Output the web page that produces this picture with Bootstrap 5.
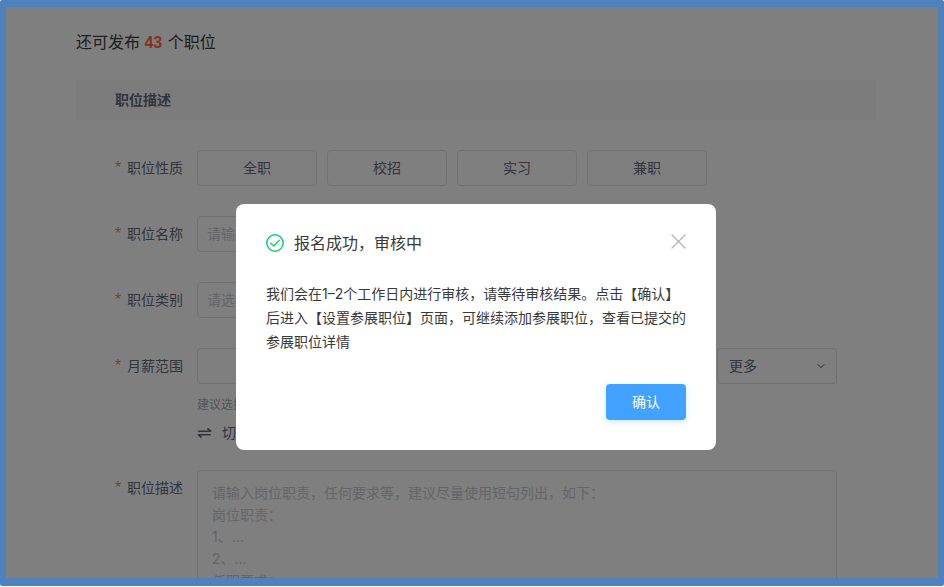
<!DOCTYPE html>
<html lang="zh-CN">
<head>
<meta charset="utf-8">
<meta name="viewport" content="width=device-width, initial-scale=1">
<title>发布职位</title>
<link href="https://cdn.jsdelivr.net/npm/bootstrap@5.3.0/dist/css/bootstrap.min.css" rel="stylesheet">
<style>
body { font-family: "Liberation Sans", "Noto Sans CJK SC", sans-serif; font-size: 14px; line-height: 20px; color: #666b7c; background: #fff; }
.frame { height: calc(100vh - 1px); background: #4f81bd; border-radius: 2px; padding: 7px 6px 8px; }
.stage { background: #fff; }
.job-form { padding: 24px 62px 0 70px; }
.quota { font-size: 16px; line-height: 24px; color: #3c3c3c; margin-bottom: 25px; }
.quota strong { color: #ff6a3d; margin-right: 1px; }
.section-head { background: #f8f8f8; font-size: 14px; line-height: 20px; font-weight: 700; padding: 10px 39px; margin-bottom: 30px; }
.fields { padding: 0 39px; }
.field-row { margin-bottom: 30px; }
.salary-row { margin-bottom: 27px; }
.field-label { width: 68px; margin-right: 14px; line-height: 36px; white-space: nowrap; display: flex; justify-content: space-between; }
.field-label::before { content: "*"; color: #ff8a2f; font-size: 16px; line-height: 36px; }
.box, .box:focus { height: 36px; border: 1px solid #e0e3e9; border-radius: 4px; font-size: 14px; line-height: 20px; color: #666b7c; background-color: #fff; padding: 7px 9px; }
.box::placeholder { color: #c8cbd2; }
.kinds { gap: 10px; }
.kind { width: 120px; }
.text-field { max-width: 510px; }
.more { width: 120px; padding-left: 11px; background-size: 10px 10px; background-position: right 10px center;
  background-image: url("data:image/svg+xml,%3csvg xmlns='http://www.w3.org/2000/svg' viewBox='0 0 10 10'%3e%3cpath fill='none' stroke='%238d92a1' stroke-width='1.2' d='M1.5 3.2 5 6.7 8.5 3.2'/%3e%3c/svg%3e"); }
.hint { font-size: 12px; line-height: 18px; color: #a6aab5; margin-top: 12px; }
.switch-mode, .switch-mode:hover { color: #666b7c; font-size: 14px; line-height: 20px; margin-top: 9px; gap: 10px; }
.desc, .desc:focus { height: 200px; padding: 11px 14px; line-height: 22px; resize: none; font-family: Inter, "Noto Sans CJK SC", sans-serif; }
.mask { background: rgba(0, 0, 0, .5); padding: 197px 0 0 8px; }
.notice { width: 480px; background: #fff; border-radius: 8px; padding: 26px 30px 30px; color: #3a3a3a; font-family: Inter, "Noto Sans CJK SC", sans-serif; }
.notice h1 { font-size: 16px; line-height: 26px; font-weight: 400; gap: 10px; }
.notice p { line-height: 24px; margin: 26px 0 30px; }
.close-x { line-height: 0; padding: 4px 0; }
.confirm { width: 80px; height: 36px; border-radius: 4px; background: #41a2ff; color: #fff; font-size: 14px; line-height: 20px; box-shadow: 0 2px 6px rgba(65, 162, 255, .25); }
.confirm:hover { background: #2f93f2; color: #fff; }
</style>
<script src="https://cdn.jsdelivr.net/npm/bootstrap@5.3.0/dist/js/bootstrap.bundle.min.js"></script>
</head>
<body>
<div class="frame">
  <div class="stage position-relative h-100 overflow-hidden">
    <form class="job-form">
      <div class="quota">还可发布 <strong>43</strong> 个职位</div>
      <h2 class="section-head">职位描述</h2>
      <div class="fields">
        <div class="field-row d-flex" role="group" aria-labelledby="kind-label">
          <span class="field-label flex-shrink-0" id="kind-label">职位性质</span>
          <div class="d-flex kinds">
            <button type="button" class="btn box kind">全职</button>
            <button type="button" class="btn box kind">校招</button>
            <button type="button" class="btn box kind">实习</button>
            <button type="button" class="btn box kind">兼职</button>
          </div>
        </div>
        <div class="field-row d-flex">
          <label class="field-label flex-shrink-0" for="name">职位名称</label>
          <input class="form-control box text-field" id="name" placeholder="请输入">
        </div>
        <div class="field-row d-flex">
          <label class="field-label flex-shrink-0" for="type">职位类别</label>
          <input class="form-control box text-field" id="type" placeholder="请选择">
        </div>
        <div class="salary-row d-flex">
          <label class="field-label flex-shrink-0" for="salary">月薪范围</label>
          <div class="flex-grow-1">
            <div class="d-flex kinds">
              <input class="form-control box" id="salary">
              <select class="form-select box more flex-shrink-0" aria-label="更多"><option>更多</option></select>
            </div>
            <div class="hint">建议选择</div>
            <button type="button" class="btn p-0 border-0 d-flex align-items-center switch-mode">
              <svg width="15" height="12" viewBox="0 0 15 12" fill="none" stroke="currentColor" stroke-width="1.6" stroke-linejoin="round" aria-hidden="true"><path d="M1.2 4.2h12.4L10.4 1.4M13.8 7.8H1.4L4.6 10.6"/></svg>
              切换
            </button>
          </div>
        </div>
        <div class="d-flex">
          <label class="field-label flex-shrink-0" for="desc">职位描述</label>
          <textarea class="form-control box desc" id="desc" placeholder="请输入岗位职责，任何要求等，建议尽量使用短句列出，如下：
岗位职责：
1、...
2、...
任职要求："></textarea>
        </div>
      </div>
    </form>
    <div class="mask position-absolute top-0 start-0 w-100 h-100 d-flex justify-content-center align-items-start">
      <div class="notice" role="dialog" aria-modal="true" aria-labelledby="notice-title">
        <div class="d-flex justify-content-between align-items-start">
          <h1 class="d-flex align-items-center mb-0" id="notice-title">
            <svg width="18" height="18" viewBox="0 0 18 18" fill="none" stroke="#15cd7a" stroke-width="1.5" stroke-linecap="round" stroke-linejoin="round" aria-hidden="true"><circle cx="9" cy="9" r="8.2"/><path d="M4.8 9.2 7.8 12 13.2 6.4"/></svg>
            报名成功，审核中
          </h1>
          <button type="button" class="btn border-0 close-x" aria-label="关闭">
            <svg width="15" height="15" viewBox="0 0 15 15" fill="none" stroke="#b3b3b3" stroke-width="1.3" stroke-linecap="round"><path d="m1 1 13 13M14 1 1 14"/></svg>
          </button>
        </div>
        <p>我们会在1–2个工作日内进行审核，请等待审核结果。点击【确认】后进入【设置参展职位】页面，可继续添加参展职位，查看已提交的参展职位详情</p>
        <div class="d-flex justify-content-end">
          <button type="button" class="btn border-0 p-0 confirm">确认</button>
        </div>
      </div>
    </div>
  </div>
</div>
</body>
</html>
